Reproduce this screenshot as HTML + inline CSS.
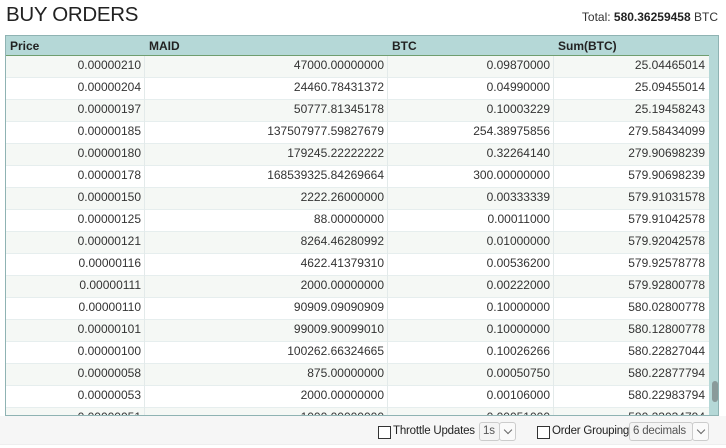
<!DOCTYPE html>
<html><head><meta charset="utf-8"><style>
*{margin:0;padding:0;box-sizing:border-box}
body{width:726px;height:448px;background:#fff;font-family:"Liberation Sans",sans-serif;color:#333;position:relative;overflow:hidden}
h1{position:absolute;left:6px;top:3px;font-size:20.5px;font-weight:normal;color:#222;letter-spacing:-0.3px}
.total{position:absolute;right:8px;top:10px;font-size:12px;color:#333}
.total b{color:#222}
.box{position:absolute;left:5px;top:35px;width:714px;height:381px;border:1px solid #8fb3b3;overflow:hidden;background:#b5d8d7}
.hdr{position:absolute;left:0;top:0;width:703px;height:20px;background:#b5d8d7;border-bottom:1px solid #6f9e6f;font-size:12px;font-weight:bold;color:#222}
.hdr div{position:absolute;top:3px}
.rows{position:absolute;left:0;top:20px;width:703px;height:360px;background:#fff;overflow:hidden}
.r{height:22px;position:relative;font-size:12px;border-bottom:1px solid #e6eeee}
.r:nth-child(odd){background:#f5f8f5}
.r span{position:absolute;top:2px;text-align:right}
.c1{left:0;width:135px}.c2{left:138px;width:240px}.c3{left:381px;width:163px}.c4{left:547px;width:152px}
.v{position:absolute;top:0;bottom:0;width:1px;background:#e3eaea}
.thumb{position:absolute;left:706px;top:345px;width:6px;height:21px;background:#8a9a9a;border-radius:3px}
.foot{position:absolute;left:0;top:416px;width:726px;height:29px;background:#f6f6f6;border-bottom:1px solid #eee;font-size:11.5px;color:#222;white-space:nowrap;letter-spacing:-0.2px}
.cb{position:absolute;top:10px;width:13px;height:13px;border:1px solid #333;background:#fff}
.sel{position:absolute;top:6px;height:19px;border:1px solid #ccc;border-radius:3px;background:#f4f4f4;color:#555;padding:2px 3px;white-space:nowrap;overflow:hidden}
.arr{position:absolute;top:6px;width:17px;height:19px;border:1px solid #ccc;border-radius:3px;background:#fafafa}
.arr:after{content:"";position:absolute;left:5px;top:4px;width:5px;height:5px;border-right:1px solid #666;border-bottom:1px solid #666;transform:rotate(45deg)}
.lbl{position:absolute;top:9px}
</style></head><body>
<h1>BUY ORDERS</h1>
<div class="total">Total: <b>580.36259458</b> BTC</div>
<div class="box">
<div class="hdr"><div style="left:4px">Price</div><div style="left:143px">MAID</div><div style="left:386px">BTC</div><div style="left:552px">Sum(BTC)</div></div>
<div class="rows">
<div class="r"><span class="c1">0.00000210</span><span class="c2">47000.00000000</span><span class="c3">0.09870000</span><span class="c4">25.04465014</span></div>
<div class="r"><span class="c1">0.00000204</span><span class="c2">24460.78431372</span><span class="c3">0.04990000</span><span class="c4">25.09455014</span></div>
<div class="r"><span class="c1">0.00000197</span><span class="c2">50777.81345178</span><span class="c3">0.10003229</span><span class="c4">25.19458243</span></div>
<div class="r"><span class="c1">0.00000185</span><span class="c2">137507977.59827679</span><span class="c3">254.38975856</span><span class="c4">279.58434099</span></div>
<div class="r"><span class="c1">0.00000180</span><span class="c2">179245.22222222</span><span class="c3">0.32264140</span><span class="c4">279.90698239</span></div>
<div class="r"><span class="c1">0.00000178</span><span class="c2">168539325.84269664</span><span class="c3">300.00000000</span><span class="c4">579.90698239</span></div>
<div class="r"><span class="c1">0.00000150</span><span class="c2">2222.26000000</span><span class="c3">0.00333339</span><span class="c4">579.91031578</span></div>
<div class="r"><span class="c1">0.00000125</span><span class="c2">88.00000000</span><span class="c3">0.00011000</span><span class="c4">579.91042578</span></div>
<div class="r"><span class="c1">0.00000121</span><span class="c2">8264.46280992</span><span class="c3">0.01000000</span><span class="c4">579.92042578</span></div>
<div class="r"><span class="c1">0.00000116</span><span class="c2">4622.41379310</span><span class="c3">0.00536200</span><span class="c4">579.92578778</span></div>
<div class="r"><span class="c1">0.00000111</span><span class="c2">2000.00000000</span><span class="c3">0.00222000</span><span class="c4">579.92800778</span></div>
<div class="r"><span class="c1">0.00000110</span><span class="c2">90909.09090909</span><span class="c3">0.10000000</span><span class="c4">580.02800778</span></div>
<div class="r"><span class="c1">0.00000101</span><span class="c2">99009.90099010</span><span class="c3">0.10000000</span><span class="c4">580.12800778</span></div>
<div class="r"><span class="c1">0.00000100</span><span class="c2">100262.66324665</span><span class="c3">0.10026266</span><span class="c4">580.22827044</span></div>
<div class="r"><span class="c1">0.00000058</span><span class="c2">875.00000000</span><span class="c3">0.00050750</span><span class="c4">580.22877794</span></div>
<div class="r"><span class="c1">0.00000053</span><span class="c2">2000.00000000</span><span class="c3">0.00106000</span><span class="c4">580.22983794</span></div>
<div class="r"><span class="c1">0.00000051</span><span class="c2">1000.00000000</span><span class="c3">0.00051000</span><span class="c4">580.23034794</span></div>
<div class="v" style="left:138px"></div><div class="v" style="left:381px"></div><div class="v" style="left:547px"></div>
</div>
<div class="thumb"></div>
</div>
<div class="foot">
<div class="cb" style="left:378px"></div><div class="lbl" style="left:393px">Throttle Updates</div>
<div class="sel" style="left:479px;width:21px">1s</div><div class="arr" style="left:499px"></div>
<div class="cb" style="left:537px"></div><div class="lbl" style="left:552px">Order Grouping</div>
<div class="sel" style="left:629px;width:64px">6 decimals</div><div class="arr" style="left:692px"></div>
</div>
</body></html>
